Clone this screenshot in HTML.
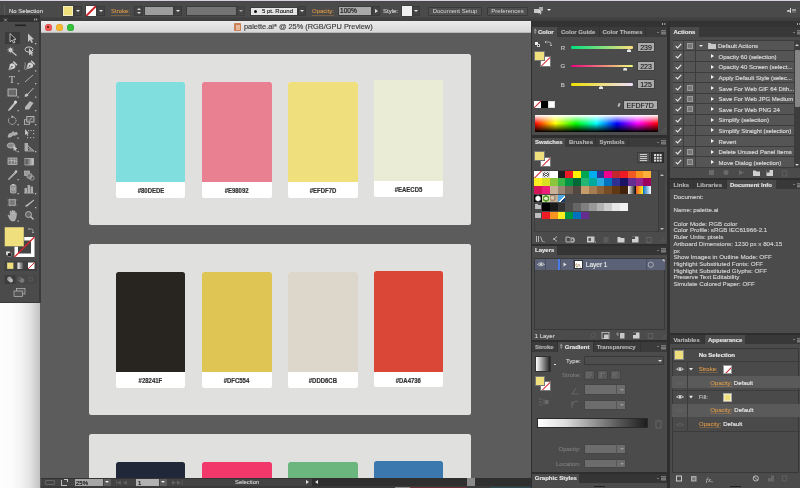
<!DOCTYPE html>
<html><head><meta charset="utf-8">
<style>
*{margin:0;padding:0;box-sizing:border-box}
html,body{width:800px;height:488px;overflow:hidden;background:#3a3a3a;font-family:"Liberation Sans",sans-serif;position:relative}
.a{position:absolute}
.t{position:absolute;white-space:nowrap;color:#d6d6d6;font-size:7px;line-height:1;-webkit-text-stroke:0.15px currentColor}
.dd{width:8px;height:10px;background:#444;border:1px solid #3a3a3a}
.dd:after{content:"";position:absolute;left:0.8px;top:3px;border-left:2px solid transparent;border-right:2px solid transparent;border-top:2.5px solid #e6e6e6}
.btn{height:9px;background:#505050;border:1px solid #3a3a3a;border-radius:1px;font-size:6px;color:#d8d8d8;text-align:center;line-height:7px}
.card{width:69.2px;height:116.3px;border-radius:2.5px;overflow:hidden;background:#fff}
.lab{-webkit-text-stroke:0.2px #333;height:16px;text-align:center;font-size:6.3px;font-weight:bold;color:#333;line-height:18.4px}.lab span{display:inline-block;transform:scaleX(0.95)}
.dd2{width:7.5px;height:7.5px;background:#5d5d5d}
.dd2:after{content:"";position:absolute;left:1.5px;top:2.5px;border-left:2.2px solid transparent;border-right:2.2px solid transparent;border-top:2.5px solid #eee}
.pn{background:#4b4b4b}
.tabrow{height:10px;background:#3b3b3b}
.tabon{height:10px;background:#4b4b4b}
.sep{width:1px;height:10px;background:#333}
.tb{font-size:6px;font-weight:bold;color:#b5b5b5}
.menu{width:9px;height:5px}
.menu:before{content:"";position:absolute;left:0;top:1.5px;border-left:1.5px solid transparent;border-right:1.5px solid transparent;border-top:1.8px solid #bbb}
.menu:after{content:"";position:absolute;left:4px;top:0;width:5px;height:5px;background:repeating-linear-gradient(#777 0 1px,#5a5a5a 1px 1.6px)}
.slid{width:62.5px;height:2.6px;border-radius:1.3px}
.thumb{width:4px;height:3px;background:#e8e8e8;clip-path:polygon(50% 0,100% 40%,100% 100%,0 100%,0 40%)}
.fld{background:#ababab;border:0.5px solid #404040;font-size:7px;color:#151515;text-align:center;line-height:10px;-webkit-text-stroke:0.1px #151515}
</style></head><body><div id="root" style="position:absolute;left:0;top:0;width:800px;height:488px;will-change:transform">
<!-- top line -->
<div class="a" style="left:0;top:0;width:800px;height:1px;background:#d8cfe0"></div>
<!-- control bar -->
<div class="a" id="cbar" style="left:0;top:1px;width:800px;height:19.5px;background:linear-gradient(#444 0,#4a4a4a 1px,#4a4a4a 15.5px,#414141 17px,#3e3e3e 100%)"></div>

<!-- control bar content -->
<div class="a" style="left:4px;top:5px;width:1px;height:10px;background:#3a3a3a;border-right:1px solid #5a5a5a"></div>
<div class="t" style="left:9px;top:8px;font-size:6px;color:#dcdcdc">No Selection</div>
<div class="a" style="left:63px;top:6px;width:10px;height:10px;background:#efdf7d;border:1px solid #f6efc0;box-shadow:0 0 0 0.5px #333"></div>
<div class="a dd" style="left:74px;top:6px"></div>
<div class="a" style="left:86px;top:6px;width:10px;height:10px;background:#fff;box-shadow:0 0 0 0.5px #333;overflow:hidden"><div class="a" style="left:-2px;top:4px;width:14px;height:1.5px;background:#d0202a;transform:rotate(-45deg)"></div></div>
<div class="a dd" style="left:97px;top:6px"></div>
<div class="t" style="left:111px;top:8px;font-size:6px;color:#e39d48;border-bottom:0.6px solid rgba(225,150,60,0.3);padding-bottom:0.6px;-webkit-text-stroke:0.05px">Stroke:</div>
<div class="a" style="left:134px;top:6px;width:9px;height:10px;background:#444;border:1px solid #3a3a3a"></div>
<div class="a" style="left:136.5px;top:7.5px;width:0;height:0;border-left:2px solid transparent;border-right:2px solid transparent;border-bottom:2px solid #cfcfcf"></div>
<div class="a" style="left:136.5px;top:12px;width:0;height:0;border-left:2px solid transparent;border-right:2px solid transparent;border-top:2px solid #cfcfcf"></div>
<div class="a" style="left:144px;top:6px;width:30px;height:10px;background:#9d9d9d;border:1px solid #3c3c3c"></div>
<div class="a dd" style="left:174px;top:6px"></div>
<div class="a" style="left:186px;top:6px;width:51px;height:10px;background:#747474;border:1px solid #3c3c3c"></div>
<div class="a dd" style="left:237px;top:6px;opacity:.6"></div>
<div class="a" style="left:250px;top:6.5px;width:48px;height:9px;background:#e4e4e4;border:1px solid #3c3c3c"></div>
<div class="a" style="left:253.5px;top:9.5px;width:3px;height:3px;border-radius:50%;background:#111"></div>
<div class="t" style="left:262px;top:8px;font-size:6px;color:#222">5 pt. Round</div>
<div class="a dd" style="left:298px;top:6px"></div>
<div class="t" style="left:312px;top:8px;font-size:6px;color:#e39d48;border-bottom:0.6px solid rgba(225,150,60,0.3);padding-bottom:0.6px;-webkit-text-stroke:0.05px">Opacity:</div>
<div class="a" style="left:338px;top:6px;width:34px;height:10px;background:#a9a9a9;border:1px solid #3c3c3c"></div>
<div class="t" style="left:340px;top:8px;font-size:6.6px;color:#111">100%</div>
<div class="a" style="left:372px;top:6px;width:8px;height:10px;background:#444;border:1px solid #3a3a3a"></div>
<div class="a" style="left:374.5px;top:9px;width:0;height:0;border-top:2px solid transparent;border-bottom:2px solid transparent;border-left:3px solid #e0e0e0"></div>
<div class="t" style="left:383px;top:8px;font-size:6px;color:#cfcfcf">Style:</div>
<div class="a" style="left:402px;top:6px;width:10px;height:10px;background:#efefef;box-shadow:0 0 0 0.5px #333"></div>
<div class="a dd" style="left:412px;top:6px"></div>
<div class="a btn" style="left:428px;top:6.5px;width:54px"><span>Document Setup</span></div>
<div class="a btn" style="left:487px;top:6.5px;width:41px"><span>Preferences</span></div>
<!-- cbar right icons -->
<div class="a" style="left:538.5px;top:6.5px;width:4px;height:4px;background:#aaa"></div>
<div class="a" style="left:534px;top:8.5px;width:5px;height:4px;background:#c8c8c8"></div>
<svg class="a" style="left:537.5px;top:9px" width="6" height="6"><path d="M0.5 0.5 L0.5 5 L1.7 3.8 L2.6 5.5 L3.3 5.2 L2.5 3.5 L4.2 3.4 Z" fill="#e0e0e0"/></svg>
<div class="a" style="left:546.5px;top:9.3px;border-left:2px solid transparent;border-right:2px solid transparent;border-top:2.5px solid #eee"></div>
<div class="a" style="left:786.5px;top:10px;width:3px;height:2px;background:#ccc;border-radius:1px"></div>
<div class="a" style="left:790px;top:8px;width:1.2px;height:5px;background:#d8d8d8"></div>
<div class="a" style="left:792px;top:9px;width:3.5px;height:4px;background:repeating-linear-gradient(#999 0 0.8px,#666 0.8px 1.3px)"></div>
<!-- dock dark band -->
<div class="a" style="left:0;top:20.5px;width:800px;height:1px;background:#353535"></div>

<!-- desktop white below tools -->
<div class="a" style="left:40px;top:303px;width:1px;height:185px;background:#5c5c5c"></div><div class="a" style="left:0;top:303px;width:40px;height:185px;background:linear-gradient(90deg,#fdfdfd 0%,#fbfbfb 30%,#f2f2f2 55%,#e2e2e2 76%,#c2c2c2 100%)"></div>

<!-- tools panel -->
<div class="a" id="tools" style="left:0;top:15px;width:40px;height:288px;background:#4b4b4b;border-right:1px solid #3a3a3a;border-bottom:1px solid #3a3a3a"></div>
<div class="a" style="left:0;top:15px;width:40px;height:7px;background:#323232"></div>


<!-- tools content -->
<svg class="a" style="left:0;top:0" width="41" height="303" viewBox="0 0 41 303">
<g fill="none" stroke="#a8a8a8" stroke-width="0.8"><path d="M4 18.5 L7 21.5 M7 18.5 L4 21.5"/></g>
<g fill="#9a9a9a"><rect x="34" y="18.5" width="1.2" height="2"/><rect x="36" y="18.5" width="1.2" height="2"/></g>
<rect x="15" y="24.5" width="11" height="1.6" fill="#222"/>
<rect x="5" y="32" width="15" height="12" fill="#3b3b3b"/>
<path d="M10 33.5 L10 42 L12 40 L13.5 43 L15 42.3 L13.5 39.5 L16 39.3 Z" fill="#333" stroke="#c4c4c4" stroke-width="0.9"/>
<path d="M28 33.5 L28 42 L30 40 L31.5 43 L33 42.3 L31.5 39.5 L34 39.3 Z" fill="#c4c4c4"/>
<g fill="#bdbdbd">
<rect x="35" y="43" width="1.3" height="1.3"/><rect x="18.3" y="70.3" width="1.3" height="1.3"/><rect x="35" y="70.3" width="1.3" height="1.3"/>
<rect x="17.5" y="83" width="1.3" height="1.3"/><rect x="35" y="83" width="1.3" height="1.3"/>
<rect x="17.5" y="96.5" width="1.3" height="1.3"/><rect x="35" y="96.5" width="1.3" height="1.3"/>
<rect x="17.5" y="110" width="1.3" height="1.3"/><rect x="35" y="110" width="1.3" height="1.3"/>
<rect x="17.5" y="124" width="1.3" height="1.3"/><rect x="35" y="124" width="1.3" height="1.3"/>
<rect x="17.5" y="137.5" width="1.3" height="1.3"/>
<rect x="17.5" y="151" width="1.3" height="1.3"/><rect x="35" y="151" width="1.3" height="1.3"/>
<rect x="17.5" y="179" width="1.3" height="1.3"/>
<rect x="17.5" y="193" width="1.3" height="1.3"/><rect x="35" y="193" width="1.3" height="1.3"/>
<rect x="35" y="207" width="1.3" height="1.3"/><rect x="17.5" y="220.5" width="1.3" height="1.3"/>
</g>
<!-- magic wand -->
<path d="M11 51 L16.5 55.5" stroke="#c4c4c4" stroke-width="1.2"/>
<circle cx="10.5" cy="50" r="2" fill="#e0e0e0"/>
<path d="M10.5 46.5 v7 M7 50 h7 M8 47.5 l5 5 M13 47.5 l-5 5" stroke="#bbb" stroke-width="0.5"/>
<!-- lasso -->
<ellipse cx="29" cy="49.5" rx="4" ry="2.6" fill="none" stroke="#c4c4c4" stroke-width="1"/>
<path d="M29 48 L29 55.5 L30.6 54 L31.8 56 L32.8 55.5 L31.8 53.5 L33.5 53.3 Z" fill="#c4c4c4"/>
<!-- pen -->
<g transform="translate(14.3 64.3) rotate(45)"><path d="M0 8.5 L-3 2.8 Q-3 0 0 0 Q3 0 3 2.8 Z" fill="#d2d2d2"/><rect x="-2.6" y="-1.9" width="5.2" height="1.4" fill="#d2d2d2"/><path d="M0 8 L0 3.5" stroke="#4a4a4a" stroke-width="0.6"/><circle cx="0" cy="3.3" r="0.7" fill="#4a4a4a"/></g>
<g transform="translate(32.1 63.5) rotate(45)"><path d="M0 8.5 L-3 2.8 Q-3 0 0 0 Q3 0 3 2.8 Z" fill="#d2d2d2"/><rect x="-2.6" y="-1.9" width="5.2" height="1.4" fill="#d2d2d2"/><path d="M0 8 L0 3.5" stroke="#4a4a4a" stroke-width="0.6"/><circle cx="0" cy="3.3" r="0.7" fill="#4a4a4a"/></g>
<path d="M24.8 62.5 Q26 64.5 24.8 66.5 Q23.8 69 26 70" fill="none" stroke="#aaa" stroke-width="0.8"/>
<!-- type -->
<text x="8.7" y="82.5" font-family="Liberation Serif" font-size="10.5" fill="#c4c4c4">T</text>
<!-- line -->
<path d="M25 82 L33 75" stroke="#c4c4c4" stroke-width="0.8"/>
<!-- rectangle -->
<rect x="8" y="89" width="8.5" height="7" fill="#6a6a6a" stroke="#c4c4c4" stroke-width="0.8"/>
<!-- paintbrush -->
<path d="M33.5 88 L28 94" stroke="#c4c4c4" stroke-width="0.9"/>
<path d="M24.5 96.5 Q25 93 27.5 93.5 Q29 95 28 96 Q26.5 97 24.5 96.5 Z" fill="#c4c4c4"/>
<!-- pencil -->
<path d="M15.5 101.5 L9.5 108.5 L8.5 110.5 L10.5 109.5 L16.5 102.5 Z" fill="#c4c4c4" stroke="#c4c4c4" stroke-width="0.8"/>
<circle cx="15.5" cy="102" r="1.5" fill="#ddd"/>
<!-- eraser -->
<path d="M30 101 L33.5 103 L29 109.5 L25 109.5 L25 107 Z" fill="#b5b5b5"/>
<!-- rotate -->
<path d="M13.5 117 A3.8 3.8 0 1 1 9.5 118" fill="none" stroke="#c4c4c4" stroke-width="1" stroke-dasharray="1.3 0.7"/>
<path d="M11.5 115.2 L13.8 117 L11.5 118.3 Z" fill="#c4c4c4"/>
<!-- scale -->
<rect x="24.5" y="119.8" width="5" height="4.5" fill="none" stroke="#c4c4c4" stroke-width="0.8"/>
<rect x="26.8" y="116.5" width="7.2" height="5.5" fill="#5a5a5a" stroke="#c4c4c4" stroke-width="0.8"/><path d="M28.5 121 L32.5 117.5" stroke="#ccc" stroke-width="0.6"/>
<!-- warp -->
<path d="M8 137 Q9 132 11 134 Q13 130 14.5 133 Q17 131 17.5 134 Q15 136 13 135 Q11 138 8 137 Z" fill="#aaa" stroke="#c4c4c4" stroke-width="0.6"/>
<!-- free transform -->
<path d="M25 129 L25 135 L26.5 134 L27.5 136 L28.3 135.6 L27.4 133.6 L29 133.4 Z" fill="#c4c4c4"/>
<g fill="#aaa"><rect x="28" y="130" width="1.2" height="1.2"/><rect x="30.5" y="130" width="1.2" height="1.2"/><rect x="33" y="130" width="1.2" height="1.2"/><rect x="33" y="133" width="1.2" height="1.2"/><rect x="27" y="137" width="1.2" height="1.2"/><rect x="30" y="137" width="1.2" height="1.2"/><rect x="33" y="137" width="1.2" height="1.2"/></g>
<!-- shape builder -->
<ellipse cx="11" cy="145.5" rx="3.8" ry="2.6" fill="#888" stroke="#c4c4c4" stroke-width="0.7"/>
<path d="M13.5 145 L13.5 151 L14.9 149.7 L15.9 151.6 L16.7 151.2 L15.8 149.3 L17.4 149.1 Z" fill="#c4c4c4"/>
<!-- perspective grid -->
<path d="M25 143 L25 151 L34 151 Z" fill="none" stroke="#c4c4c4" stroke-width="0.7"/>
<path d="M25 143 L32 150 M27.5 144 L27.5 151 M30 147 L30 151 M25 147 L34 151" stroke="#aaa" stroke-width="0.5"/>
<rect x="25" y="143" width="3" height="8" fill="#aaa"/>
<!-- mesh -->
<rect x="8" y="158" width="9" height="6.5" fill="#777" stroke="#c4c4c4" stroke-width="0.7"/>
<path d="M8 161 Q12 159.5 17 161.5 M11 158 Q12.5 161 11 164.5 M14 158 Q15.5 161 14 164.5" fill="none" stroke="#ddd" stroke-width="0.5"/>
<!-- gradient -->
<defs><linearGradient id="tg" x1="0" x2="1"><stop offset="0" stop-color="#444"/><stop offset="1" stop-color="#ccc"/></linearGradient></defs>
<rect x="25" y="158.5" width="8.5" height="6.5" fill="url(#tg)" stroke="#c4c4c4" stroke-width="0.7"/>
<!-- eyedropper -->
<path d="M15.5 171.5 L9 178.5 L8.5 179.5 L9.5 179 L16.5 172.5 Z" fill="#999" stroke="#c4c4c4" stroke-width="0.8"/>
<circle cx="16" cy="171.5" r="1.3" fill="#c4c4c4"/>
<!-- blend -->
<rect x="24.5" y="171" width="5" height="4.5" fill="#999" stroke="#c4c4c4" stroke-width="0.6"/>
<circle cx="29.5" cy="176" r="2.7" fill="#777" stroke="#c4c4c4" stroke-width="0.6"/>
<circle cx="32" cy="178" r="2.2" fill="none" stroke="#c4c4c4" stroke-width="0.6"/>
<!-- symbol sprayer -->
<rect x="10.5" y="185" width="5.5" height="8" rx="1" fill="#888" stroke="#c4c4c4" stroke-width="0.7"/>
<rect x="12" y="184" width="2.5" height="1.5" fill="#c4c4c4"/>
<circle cx="13.2" cy="189" r="1.5" fill="none" stroke="#ddd" stroke-width="0.5"/>
<!-- graph -->
<g fill="#aaa"><rect x="24.5" y="188" width="2.5" height="5"/><rect x="27.5" y="185" width="2.5" height="8"/><rect x="30.5" y="186.5" width="2.5" height="6.5"/></g>
<path d="M24 193.2 H34" stroke="#c4c4c4" stroke-width="0.6"/>
<!-- artboard -->
<rect x="9" y="199.5" width="6.5" height="6" fill="#777" stroke="#c4c4c4" stroke-width="0.6"/>
<path d="M7 200 H18 M7 205 H18 M10 198 V207 M14.5 198 V207" stroke="#999" stroke-width="0.4"/>
<!-- slice/knife -->
<path d="M34 200 L25.5 206 L27 206.2 Z" fill="#c4c4c4" stroke="#c4c4c4" stroke-width="0.8"/>
<!-- hand -->
<path d="M8 215 Q9 219 11.5 221 L14.5 221 Q16.5 218 16.5 214 L16 212.5 L15.2 214.5 L15 211 L14 211 L13.5 214 L13.2 210.5 L12 210.5 L11.8 214 L11 211.2 L10 211.3 L10.4 216 Z" fill="#aaa" stroke="#c4c4c4" stroke-width="0.5"/>
<!-- zoom -->
<circle cx="28.5" cy="214.5" r="3" fill="#666" stroke="#c4c4c4" stroke-width="0.8"/>
<path d="M30.5 216.5 L33.5 219.5" stroke="#c4c4c4" stroke-width="1.2"/>
<!-- swap arrows -->
<path d="M29 229 L31.5 229 Q33 229 33 231 L33 232.5 M28.5 228 L29 229 L28.5 230 M32 232 L33 233 L34 232" fill="none" stroke="#bbb" stroke-width="0.7"/>
<!-- stroke swatch -->
<rect x="14.5" y="237" width="20" height="20" fill="#fff"/>
<rect x="18" y="240.5" width="13" height="13" fill="#454545"/>
<path d="M14.5 257 L34.5 237" stroke="#d8262c" stroke-width="1.3"/>
<!-- fill swatch -->
<rect x="4.5" y="227" width="19.5" height="19.5" fill="#efdf7d" stroke="#555" stroke-width="0.5"/>
<!-- default -->
<rect x="6.2" y="251.5" width="3.5" height="3.5" fill="#eee"/>
<rect x="7.8" y="253" width="3.5" height="3.5" fill="#222" stroke="#ccc" stroke-width="0.4"/>
<!-- mode buttons -->
<rect x="4.5" y="261" width="32.5" height="10" fill="#3f3f3f"/>
<rect x="7" y="262.5" width="6.5" height="6.5" fill="#efdf7d" stroke="#666" stroke-width="0.4"/>
<defs><linearGradient id="tg2" x1="0" x2="1"><stop offset="0" stop-color="#fafafa"/><stop offset="1" stop-color="#333"/></linearGradient></defs>
<rect x="17.5" y="262.5" width="6.5" height="6.5" fill="url(#tg2)"/>
<rect x="28" y="262.5" width="6.5" height="6.5" fill="#fff"/>
<path d="M28 269 L34.5 262.5" stroke="#d8262c" stroke-width="1"/>
<!-- draw modes -->
<rect x="4.5" y="275" width="32.5" height="9" fill="#484848"/>
<rect x="4.5" y="275" width="11" height="9" fill="#3d3d3d"/>
<circle cx="9.5" cy="279" r="2" fill="#999" stroke="#ccc" stroke-width="0.5"/><circle cx="11" cy="280.5" r="2" fill="#bbb"/>
<circle cx="20" cy="279.3" r="2" fill="none" stroke="#888" stroke-width="0.5"/><circle cx="22" cy="280.5" r="2" fill="#777" stroke="#888" stroke-width="0.5"/>
<rect x="29" y="277.5" width="3.5" height="3.5" fill="none" stroke="#666" stroke-width="0.5"/>
<!-- screen mode -->
<rect x="16.5" y="288.5" width="8.5" height="5.5" fill="#555" stroke="#bbb" stroke-width="0.7"/>
<rect x="14" y="291" width="8.5" height="5.5" fill="#555" stroke="#bbb" stroke-width="0.7"/>
</svg>
<!-- document window -->
<div class="a" id="doc" style="left:41px;top:21px;width:490px;height:467px;background:#5c5c5c"></div>
<div class="a" id="title" style="left:41px;top:21px;width:490px;height:12px;background:linear-gradient(#ececec,#d8d8d8);border-bottom:1px solid #b9b9b9"></div>


<!-- doc content -->
<div class="a" style="left:88.5px;top:54px;width:382.5px;height:171px;background:#e0e0df;border-radius:2.5px"></div>
<div class="a card" style="left:116px;top:81.5px;width:69.2px"><div style="height:100.6px;background:#80dede"></div><div class="lab"><span>#80DEDE</span></div></div>
<div class="a card" style="left:202px;top:81.5px;width:69.5px"><div style="height:100.6px;background:#e98092"></div><div class="lab"><span>#E98092</span></div></div>
<div class="a card" style="left:288.2px;top:81.5px;width:69.4px"><div style="height:100.6px;background:#efdf7d"></div><div class="lab"><span>#EFDF7D</span></div></div>
<div class="a card" style="left:374px;top:80.3px;width:69.1px"><div style="height:100.6px;background:#eaecd5"></div><div class="lab"><span>#EAECD5</span></div></div>
<div class="a" style="left:88.5px;top:244px;width:382.5px;height:171px;background:#e0e0df;border-radius:2.5px"></div>
<div class="a card" style="left:116px;top:271.9px;width:69.2px"><div style="height:100.6px;background:#28241f"></div><div class="lab"><span>#28241F</span></div></div>
<div class="a card" style="left:202px;top:271.9px;width:69.5px"><div style="height:100.6px;background:#dfc554"></div><div class="lab"><span>#DFC554</span></div></div>
<div class="a card" style="left:288.2px;top:271.9px;width:69.4px"><div style="height:100.6px;background:#ddd6cb"></div><div class="lab"><span>#DDD6CB</span></div></div>
<div class="a card" style="left:374px;top:271.0px;width:69.1px"><div style="height:100.6px;background:#da4736"></div><div class="lab"><span>#DA4736</span></div></div>
<div class="a" style="left:88.5px;top:434px;width:382.5px;height:171px;background:#e0e0df;border-radius:2.5px"></div>
<div class="a card" style="left:116px;top:461.9px;width:69.2px"><div style="height:100.6px;background:#1f2738"></div><div class="lab"><span></span></div></div>
<div class="a card" style="left:202px;top:461.9px;width:69.5px"><div style="height:100.6px;background:#f2386a"></div><div class="lab"><span></span></div></div>
<div class="a card" style="left:288.2px;top:461.9px;width:69.4px"><div style="height:100.6px;background:#6bb57f"></div><div class="lab"><span></span></div></div>
<div class="a card" style="left:374px;top:460.9px;width:69.1px"><div style="height:100.6px;background:#3a78ae"></div><div class="lab"><span></span></div></div>
<!-- title bar content -->
<div class="a" style="left:44.5px;top:23.5px;width:7px;height:7px;border-radius:50%;background:#ee5b56;box-shadow:inset 0 0 0 0.5px #d84a45"></div>
<div class="a" style="left:47px;top:26px;width:2px;height:2px;border-radius:50%;background:#5a0f0d"></div>
<div class="a" style="left:55.5px;top:23.5px;width:7px;height:7px;border-radius:50%;background:#f5b730;box-shadow:inset 0 0 0 0.5px #dea020"></div>
<div class="a" style="left:66.5px;top:23.5px;width:7px;height:7px;border-radius:50%;background:#35c13b;box-shadow:inset 0 0 0 0.5px #22a52a"></div>
<div class="a" style="left:234px;top:23px;width:7px;height:8px;background:#c98054;border-radius:1px"></div>
<div class="a" style="left:236px;top:25px;width:4px;height:5px;background:#e7b99a"></div>
<div class="t" style="left:244px;top:23px;font-size:7.4px;color:#3c3c3c">palette.ai* @ 25% (RGB/GPU Preview)</div>
<!-- status bar -->
<div class="a" style="left:41px;top:478px;width:490px;height:8px;background:#434343;border-top:0.5px solid #333"></div>
<div class="a" style="left:41px;top:486px;width:490px;height:2px;background:#3a3a3a"></div>
<div class="a" style="left:44.5px;top:479.5px;width:10px;height:5px;border:0.7px solid #666;border-radius:1px"></div>
<div class="a" style="left:61px;top:479.5px;width:6px;height:6px;border:0.7px solid #bbb;border-top:none;border-right:none"></div>
<div class="a" style="left:63.5px;top:479px;width:4px;height:3px;border:0.7px solid #ccc;border-left:none;border-bottom:none"></div>
<div class="a" style="left:75px;top:478.5px;width:28px;height:7.5px;background:#a6a6a6"></div>
<div class="t" style="left:76px;top:480px;font-size:6px;color:#111">25%</div>
<div class="a dd2" style="left:103.5px;top:478.5px"></div>
<div class="t" style="left:116px;top:480px;font-size:5px;color:#666">|◀ ◀</div>
<div class="a" style="left:136px;top:478.5px;width:23px;height:7.5px;background:#b2b2b2"></div>
<div class="t" style="left:138px;top:480px;font-size:6px;color:#111">1</div>
<div class="a dd2" style="left:159.5px;top:478.5px"></div>
<div class="t" style="left:172px;top:480px;font-size:5px;color:#666">▶ ▶|</div>
<div class="t" style="left:235px;top:480px;font-size:5.9px;color:#cfcfcf">Selection</div>
<div class="a" style="left:306px;top:480px;width:0;height:0;border-top:2.2px solid transparent;border-bottom:2.2px solid transparent;border-left:3px solid #ddd"></div>
<div class="a" style="left:312px;top:478px;width:219px;height:8px;background:#2f2f2f"></div>
<div class="a" style="left:315px;top:480px;width:0;height:0;border-top:2.2px solid transparent;border-bottom:2.2px solid transparent;border-right:3px solid #ddd"></div>
<div class="a" style="left:466.5px;top:478px;width:8px;height:8px;background:#8a8a8a"></div>
<div class="a" style="left:395px;top:486.5px;width:15px;height:1.5px;background:#8a8a8a"></div>
<div class="a" style="left:410px;top:486.5px;width:57px;height:1.5px;background:#6b3036"></div>
<div class="a" style="left:490px;top:486.5px;width:41px;height:1.5px;background:#2c4f57"></div>
<!-- right panels -->
<div class="a" id="col1" style="left:531px;top:21px;width:137px;height:467px;background:#535353"></div>
<div class="a" id="col2" style="left:670px;top:21px;width:130px;height:467px;background:#535353"></div>


<!-- ============ COLUMN 1 ============ -->
<!--COL1BODY-->
<div class="a" style="left:531px;top:20.5px;width:139px;height:468px;background:#2e2e2e"></div>
<div class="a" style="left:531px;top:20.5px;width:137px;height:6.5px;background:#333"></div>
<div class="a" style="left:661.5px;top:23px;width:1.3px;height:1.6px;background:#aaa;box-shadow:2.3px 0 0 #aaa"></div>
<!-- Color panel -->
<div class="a pn" style="left:532px;top:27px;width:135px;height:107.5px"></div>
<div class="a tabrow" style="left:532px;top:27px;width:135px"></div>
<div class="a tabon" style="left:532px;top:27px;width:25px"></div>
<div class="a sep" style="left:598.5px;top:27px"></div><div class="a sep" style="left:645px;top:27px"></div>
<div class="t tb" style="left:538px;top:28.8px;color:#e6e6e6">Color</div>
<div class="t tb" style="left:561px;top:28.8px">Color Guide</div>
<div class="t tb" style="left:602.5px;top:28.8px">Color Themes</div>
<div class="a menu" style="left:657px;top:30px"></div>
<div class="t" style="left:533.8px;top:29px;font-size:4.5px;color:#999;line-height:2.5px">&#9652;<br>&#9662;</div>

<!-- color body -->
<div class="a" style="left:534.8px;top:41.8px;width:3.6px;height:3.6px;background:#eee"></div>
<div class="a" style="left:536.6px;top:43.6px;width:3.6px;height:3.6px;background:#111;border:0.5px solid #ccc"></div>
<svg class="a" style="left:544px;top:40px" width="8" height="8"><path d="M1 2 L5 2 Q7 2 7 4 L7 6 M2.2 0.8 L1 2 L2.2 3.2 M5.8 4.8 L7 6 L8 4.8" fill="none" stroke="#bbb" stroke-width="0.8"/></svg>
<div class="a" style="left:540px;top:56px;width:10.5px;height:10.5px;background:#fff;border:0.5px solid #777;overflow:hidden"><div class="a" style="left:-3px;top:4.2px;width:16px;height:1.3px;background:#d42a2f;transform:rotate(-45deg)"></div></div>
<div class="a" style="left:534.3px;top:50.8px;width:10.3px;height:10px;background:#efdf7d;border:0.5px solid #777"></div>
<div class="t" style="left:560.8px;top:45px;font-size:6px;color:#c8c8c8">R</div>
<div class="t" style="left:560.5px;top:63px;font-size:6px;color:#c8c8c8">G</div>
<div class="t" style="left:560.8px;top:82px;font-size:6px;color:#c8c8c8">B</div>
<div class="a slid" style="left:570.5px;top:46px;background:linear-gradient(90deg,#00df7d,#ffdf7d)"></div>
<div class="a slid" style="left:570.5px;top:64.5px;background:linear-gradient(90deg,#ef007d,#efff7d)"></div>
<div class="a slid" style="left:570.5px;top:83px;background:linear-gradient(90deg,#efdf00,#efdfff)"></div>
<div class="a thumb" style="left:627px;top:49px"></div>
<div class="a thumb" style="left:623.2px;top:67.5px"></div>
<div class="a thumb" style="left:599px;top:86px"></div>
<div class="a fld" style="left:637px;top:42px;width:18px;height:10px">239</div>
<div class="a fld" style="left:637px;top:60.5px;width:18px;height:10px">223</div>
<div class="a fld" style="left:637px;top:79px;width:18px;height:10px">125</div>
<div class="a" style="left:534.2px;top:100.8px;width:7px;height:7px;background:#fff;overflow:hidden"><div class="a" style="left:-2px;top:2.8px;width:11px;height:1.2px;background:#d42a2f;transform:rotate(-45deg)"></div></div>
<div class="a" style="left:541.2px;top:100.8px;width:7px;height:7px;background:#000"></div>
<div class="a" style="left:548.2px;top:100.8px;width:7px;height:7px;background:#fff;border:0.5px solid #ddd"></div>
<div class="a" style="left:617.5px;top:102.5px;width:2.2px;height:4px;background:#bbb;border-radius:1px;transform:rotate(20deg)"></div>
<div class="a fld" style="left:623px;top:100px;width:35px;height:9.5px;text-align:left;padding-left:2.5px;line-height:9.5px">EFDF7D</div>
<div class="a" style="left:535px;top:114.5px;width:123px;height:17.5px;background:linear-gradient(180deg,#fff 0%,rgba(255,255,255,0) 50%,rgba(0,0,0,0) 50%,#000 100%),linear-gradient(90deg,#f00 0%,#ff0 16.6%,#0f0 33.3%,#0ff 50%,#00f 66.6%,#f0f 83.3%,#f00 100%)"></div>
<svg class="a" style="left:660px;top:127px" width="7" height="7"><path d="M6 1 L1 6 M6 3.5 L3.5 6" stroke="#666" stroke-width="0.6"/></svg>

<!-- Swatches panel -->
<div class="a" style="left:532px;top:134.5px;width:135px;height:3px;background:#2e2e2e"></div>
<div class="a pn" style="left:532px;top:137.5px;width:135px;height:106px"></div>
<div class="a tabrow" style="left:532px;top:137.5px;width:135px;height:9px"></div>
<div class="a tabon" style="left:532px;top:137.5px;width:33px;height:9px"></div>
<div class="a sep" style="left:595px;top:137.5px;height:9px"></div><div class="a sep" style="left:627.5px;top:137.5px;height:9px"></div>
<div class="t tb" style="left:535px;top:138.8px;color:#e6e6e6">Swatches</div>
<div class="t tb" style="left:569px;top:138.8px">Brushes</div>
<div class="t tb" style="left:599.5px;top:138.8px">Symbols</div>
<div class="a menu" style="left:657px;top:140px"></div>
<div class="a" style="left:540px;top:156.5px;width:10.5px;height:10px;background:#fff;border:0.5px solid #777;overflow:hidden"><div class="a" style="left:-3px;top:4px;width:16px;height:1.3px;background:#d42a2f;transform:rotate(-45deg)"></div></div>
<div class="a" style="left:534.3px;top:151px;width:10.3px;height:10px;background:#efdf7d;border:0.5px solid #777"></div>
<div class="a" style="left:636.7px;top:151.7px;width:13px;height:11.5px;background:#575757;border:0.5px solid #3a3a3a"></div>
<div class="a" style="left:639.5px;top:154px;width:7.5px;height:7px;background:repeating-linear-gradient(#c8c8c8 0 1px,transparent 1px 2px)"></div>
<div class="a" style="left:651.2px;top:151.7px;width:13px;height:11.5px;background:#333;border:0.5px solid #2a2a2a"></div>
<svg class="a" style="left:654px;top:154px" width="8" height="8"><g fill="#ddd"><rect x="0" y="0" width="2" height="2"/><rect x="2.8" y="0" width="2" height="2"/><rect x="5.6" y="0" width="2" height="2"/><rect x="0" y="2.8" width="2" height="2"/><rect x="2.8" y="2.8" width="2" height="2"/><rect x="5.6" y="2.8" width="2" height="2"/><rect x="0" y="5.6" width="2" height="2"/><rect x="2.8" y="5.6" width="2" height="2"/><rect x="5.6" y="5.6" width="2" height="2"/></g></svg>
<div class="a" style="left:533.8px;top:169.8px;width:131px;height:62.5px;border:0.5px solid #3e3e3e;background:#4a4a4a"></div>
<div class="a" style="left:657.8px;top:170px;width:7.2px;height:62px;background:#444;border-left:0.5px solid #3a3a3a"></div>
<div class="a" style="left:659.5px;top:173.5px;border-left:2px solid transparent;border-right:2px solid transparent;border-bottom:2px solid #bbb"></div>
<div class="a" style="left:659.5px;top:227.5px;border-left:2px solid transparent;border-right:2px solid transparent;border-top:2px solid #bbb"></div>
<!-- swatches grid -->
<div class="a" style="left:534.2px;top:170.6px;width:7.8px;height:7.8px;background:#fff;overflow:hidden"><div class="a" style="left:-2px;top:3.2px;width:12px;height:1.2px;background:#d42a2f;transform:rotate(-45deg)"></div></div>
<div class="a" style="left:542.0px;top:170.6px;width:7.8px;height:7.8px;background:radial-gradient(circle,#fff 0 1px,#555 1px 1.6px,#eee 1.6px 2.4px,#666 2.4px 2.9px,#ddd 2.9px)"></div>
<div class="a" style="left:549.8px;top:170.6px;width:7.8px;height:7.8px;background:#ffffff"></div>
<div class="a" style="left:557.6px;top:170.6px;width:7.8px;height:7.8px;background:#231f20"></div>
<div class="a" style="left:565.4px;top:170.6px;width:7.8px;height:7.8px;background:#ed1c24"></div>
<div class="a" style="left:573.2px;top:170.6px;width:7.8px;height:7.8px;background:#fff200"></div>
<div class="a" style="left:581.0px;top:170.6px;width:7.8px;height:7.8px;background:#00a651"></div>
<div class="a" style="left:588.8px;top:170.6px;width:7.8px;height:7.8px;background:#00aeef"></div>
<div class="a" style="left:596.6px;top:170.6px;width:7.8px;height:7.8px;background:#2e3192"></div>
<div class="a" style="left:604.4px;top:170.6px;width:7.8px;height:7.8px;background:#ec008c"></div>
<div class="a" style="left:612.2px;top:170.6px;width:7.8px;height:7.8px;background:#c1272d"></div>
<div class="a" style="left:620.0px;top:170.6px;width:7.8px;height:7.8px;background:#ed1c24"></div>
<div class="a" style="left:627.8px;top:170.6px;width:7.8px;height:7.8px;background:#f15a24"></div>
<div class="a" style="left:635.6px;top:170.6px;width:7.8px;height:7.8px;background:#f7931e"></div>
<div class="a" style="left:643.4px;top:170.6px;width:7.8px;height:7.8px;background:#fbb03b"></div>
<div class="a" style="left:534.2px;top:178.4px;width:7.8px;height:7.8px;background:#fcee21"></div>
<div class="a" style="left:542.0px;top:178.4px;width:7.8px;height:7.8px;background:#d9e021"></div>
<div class="a" style="left:549.8px;top:178.4px;width:7.8px;height:7.8px;background:#8cc63f"></div>
<div class="a" style="left:557.6px;top:178.4px;width:7.8px;height:7.8px;background:#39b54a"></div>
<div class="a" style="left:565.4px;top:178.4px;width:7.8px;height:7.8px;background:#009245"></div>
<div class="a" style="left:573.2px;top:178.4px;width:7.8px;height:7.8px;background:#006837"></div>
<div class="a" style="left:581.0px;top:178.4px;width:7.8px;height:7.8px;background:#22b573"></div>
<div class="a" style="left:588.8px;top:178.4px;width:7.8px;height:7.8px;background:#00a99d"></div>
<div class="a" style="left:596.6px;top:178.4px;width:7.8px;height:7.8px;background:#29abe2"></div>
<div class="a" style="left:604.4px;top:178.4px;width:7.8px;height:7.8px;background:#0071bc"></div>
<div class="a" style="left:612.2px;top:178.4px;width:7.8px;height:7.8px;background:#2e3192"></div>
<div class="a" style="left:620.0px;top:178.4px;width:7.8px;height:7.8px;background:#1b1464"></div>
<div class="a" style="left:627.8px;top:178.4px;width:7.8px;height:7.8px;background:#662d91"></div>
<div class="a" style="left:635.6px;top:178.4px;width:7.8px;height:7.8px;background:#93278f"></div>
<div class="a" style="left:643.4px;top:178.4px;width:7.8px;height:7.8px;background:#9e005d"></div>
<div class="a" style="left:534.2px;top:186.2px;width:7.8px;height:7.8px;background:#d4145a"></div>
<div class="a" style="left:542.0px;top:186.2px;width:7.8px;height:7.8px;background:#ed1e79"></div>
<div class="a" style="left:549.8px;top:186.2px;width:7.8px;height:7.8px;background:#c7b299"></div>
<div class="a" style="left:557.6px;top:186.2px;width:7.8px;height:7.8px;background:#998675"></div>
<div class="a" style="left:565.4px;top:186.2px;width:7.8px;height:7.8px;background:#736357"></div>
<div class="a" style="left:573.2px;top:186.2px;width:7.8px;height:7.8px;background:#534741"></div>
<div class="a" style="left:581.0px;top:186.2px;width:7.8px;height:7.8px;background:#c69c6d"></div>
<div class="a" style="left:588.8px;top:186.2px;width:7.8px;height:7.8px;background:#a67c52"></div>
<div class="a" style="left:596.6px;top:186.2px;width:7.8px;height:7.8px;background:#8c6239"></div>
<div class="a" style="left:604.4px;top:186.2px;width:7.8px;height:7.8px;background:#754c24"></div>
<div class="a" style="left:612.2px;top:186.2px;width:7.8px;height:7.8px;background:#603813"></div>
<div class="a" style="left:620.0px;top:186.2px;width:7.8px;height:7.8px;background:#42210b"></div>
<div class="a" style="left:627.8px;top:186.2px;width:7.8px;height:7.8px;background:linear-gradient(90deg,#fff,#000)"></div>
<div class="a" style="left:635.6px;top:186.2px;width:7.8px;height:7.8px;background:linear-gradient(90deg,#f15a24,#fcee21)"></div>
<div class="a" style="left:643.4px;top:186.2px;width:7.8px;height:7.8px;background:linear-gradient(90deg,#0071bc,#fff)"></div>
<div class="a" style="left:534.2px;top:194.6px;width:7.8px;height:7.8px;background:radial-gradient(circle,#fff 0 2px,#999 2.5px,#000 3.5px)"></div>
<div class="a" style="left:542.0px;top:194.6px;width:7.8px;height:7.8px;background:radial-gradient(circle,#e6f0c8 0 1.5px,#5a9a32 2px 3px,#c9df9a 3.5px)"></div>
<div class="a" style="left:549.8px;top:194.6px;width:7.8px;height:7.8px;background:radial-gradient(circle at 30% 40%,#d8c4a8 0 1.5px,#9a8572 2.5px,#c2ae95 4px)"></div>
<div class="a" style="left:557.6px;top:194.6px;width:7.8px;height:7.8px;background:linear-gradient(135deg,#4aa8e8 0 55%,#fff 55% 70%,#1a3a6a 70%)"></div>
<div class="a" style="left:534.2px;top:203.0px;width:7.8px;height:7.8px;background:transparent"><div class="a" style="left:1px;top:1.8px;width:6px;height:4.5px;background:#bdbdbd;border-radius:0.5px"></div><div class="a" style="left:1px;top:1px;width:2.5px;height:1.2px;background:#bdbdbd"></div></div>
<div class="a" style="left:542.0px;top:203.0px;width:7.8px;height:7.8px;background:#000000"></div>
<div class="a" style="left:549.8px;top:203.0px;width:7.8px;height:7.8px;background:#1a1a1a"></div>
<div class="a" style="left:557.6px;top:203.0px;width:7.8px;height:7.8px;background:#333333"></div>
<div class="a" style="left:565.4px;top:203.0px;width:7.8px;height:7.8px;background:#4d4d4d"></div>
<div class="a" style="left:573.2px;top:203.0px;width:7.8px;height:7.8px;background:#666666"></div>
<div class="a" style="left:581.0px;top:203.0px;width:7.8px;height:7.8px;background:#808080"></div>
<div class="a" style="left:588.8px;top:203.0px;width:7.8px;height:7.8px;background:#999999"></div>
<div class="a" style="left:596.6px;top:203.0px;width:7.8px;height:7.8px;background:#b3b3b3"></div>
<div class="a" style="left:604.4px;top:203.0px;width:7.8px;height:7.8px;background:#cccccc"></div>
<div class="a" style="left:612.2px;top:203.0px;width:7.8px;height:7.8px;background:#e6e6e6"></div>
<div class="a" style="left:620.0px;top:203.0px;width:7.8px;height:7.8px;background:#f2f2f2"></div>
<div class="a" style="left:534.2px;top:211.6px;width:7.8px;height:7.8px;background:transparent"><div class="a" style="left:1px;top:1.8px;width:6px;height:4.5px;background:#bdbdbd;border-radius:0.5px"></div><div class="a" style="left:1px;top:1px;width:2.5px;height:1.2px;background:#bdbdbd"></div></div>
<div class="a" style="left:542.0px;top:211.6px;width:7.8px;height:7.8px;background:#ed1c24"></div>
<div class="a" style="left:549.8px;top:211.6px;width:7.8px;height:7.8px;background:#f7931e"></div>
<div class="a" style="left:557.6px;top:211.6px;width:7.8px;height:7.8px;background:#fcee21"></div>
<div class="a" style="left:565.4px;top:211.6px;width:7.8px;height:7.8px;background:#009245"></div>
<div class="a" style="left:573.2px;top:211.6px;width:7.8px;height:7.8px;background:#0071bc"></div>
<div class="a" style="left:581.0px;top:211.6px;width:7.8px;height:7.8px;background:#662d91"></div>

<!-- swatch footer icons -->
<svg class="a" style="left:532px;top:234px" width="135" height="10">
<g fill="none" stroke="#c0c0c0" stroke-width="0.9">
<path d="M4.5 2 V8 M6.5 2 V8 M8.5 2.5 L10.5 8"/>
<path d="M25 2.5 L22 5 L25 7.5"/><circle cx="22" cy="5" r="0.6"/>
<path d="M34 3 h3 l1 1 h4 v4 h-8 z"/><circle cx="40.5" cy="6.2" r="1.6"/>
</g>
<rect x="11.5" y="7.3" width="1" height="1" fill="#bbb"/>
<rect x="55" y="2.5" width="7.5" height="6" fill="#c8c8c8"/><rect x="56.5" y="4" width="2.5" height="3" fill="#555"/><rect x="63" y="7.5" width="1" height="1" fill="#bbb"/>
<rect x="71.5" y="3" width="5" height="5.5" fill="#5c5c5c"/>
<path d="M85.5 3 h2.5 l1 1 h3.5 v4.5 h-7 z" fill="#d0d0d0"/>
<path d="M100 2.5 h6.5 v6 h-6.5 z" fill="#d0d0d0"/><path d="M100 2.5 h3 v2.5 h-3z" fill="#4a4a4a"/>
<path d="M114 3.5 h6 M114.8 4.2 v4.3 h4.4 v-4.3" fill="none" stroke="#6a6a6a" stroke-width="0.8"/>
<path d="M128 8.5 L133 3.5 M130.5 8.5 L133 6" stroke="#606060" stroke-width="0.6"/>
</svg>

<!-- Layers panel -->
<div class="a pn" style="left:532px;top:245.5px;width:135px;height:94.7px"></div>
<div class="a tabrow" style="left:532px;top:245.5px;width:135px;height:9.5px;background:#353535"></div>
<div class="a tabon" style="left:532px;top:245.5px;width:25px;height:9.5px"></div>
<div class="t tb" style="left:535px;top:247.3px;color:#e6e6e6">Layers</div>
<div class="a menu" style="left:657px;top:248px"></div>
<div class="a" style="left:533.8px;top:257.5px;width:131.5px;height:72px;border:0.7px solid #393939;background:#4a4a4a"></div>
<div class="a" style="left:534.8px;top:258.5px;width:130px;height:11.5px;background:#5b6277"></div>
<div class="a" style="left:545px;top:258.5px;width:0.6px;height:11.5px;background:#4a5062"></div>
<div class="a" style="left:557.7px;top:258.8px;width:2.3px;height:11px;background:#4a7ae8"></div>
<div class="a" style="left:560px;top:258.5px;width:0.6px;height:11.5px;background:#4a5062"></div>
<div class="a" style="left:572.5px;top:258.5px;width:0.6px;height:11.5px;background:#4a5062"></div>
<div class="a" style="left:645.5px;top:258.5px;width:0.6px;height:11.5px;background:#4a5062"></div>
<svg class="a" style="left:535px;top:259px" width="130" height="11">
<path d="M2.5 5.5 Q6 2 9.5 5.5 Q6 8.5 2.5 5.5 Z" fill="none" stroke="#d0d0d0" stroke-width="0.8"/><circle cx="6" cy="5.3" r="1.2" fill="#d0d0d0"/>
<path d="M28.5 3.5 L31.5 5.5 L28.5 7.5 Z" fill="#e0e0e0"/>
<circle cx="115.8" cy="5.7" r="2.6" fill="none" stroke="#ccc" stroke-width="0.7"/>
<path d="M127 0.5 L129.5 0.5 L129.5 3 Z" fill="#ddd"/>
</svg>
<div class="a" style="left:573.5px;top:260px;width:9px;height:9px;background:#fff;border:0.5px solid #333"></div>
<svg class="a" style="left:574px;top:260.5px" width="8" height="8"><path d="M1 5 L2.5 2.5 L3.5 6 L5 3 L6.5 6.5" fill="none" stroke="#b07a6a" stroke-width="0.6"/><rect x="2" y="5" width="1.5" height="1.5" fill="#9cbf7a"/></svg>
<div class="t" style="left:585.8px;top:261.8px;font-size:6.5px;color:#e8e8e8">Layer 1</div>
<div class="t" style="left:534.7px;top:333px;font-size:6px;color:#d0d0d0">1 Layer</div>
<svg class="a" style="left:532px;top:330px" width="135" height="11">
<circle cx="61.5" cy="5" r="2.2" fill="none" stroke="#5e5e5e" stroke-width="0.8"/><path d="M59.5 7 L57.5 9" stroke="#5e5e5e" stroke-width="0.8"/>
<rect x="70" y="2.5" width="7" height="6" fill="none" stroke="#c8c8c8" stroke-width="0.8"/><rect x="72" y="4.5" width="4.5" height="4.5" fill="#c8c8c8"/>
<path d="M85 3 h1.5 M85 3 v2 h2" stroke="#c8c8c8" stroke-width="0.6" fill="none"/><rect x="88" y="3" width="4.5" height="5.5" fill="#c8c8c8"/>
<rect x="101" y="2.5" width="6.5" height="6" fill="#d0d0d0"/><path d="M101 2.5 h3 v2.5 h-3z" fill="#4a4a4a"/>
<path d="M115.5 3.5 h6 M116.3 4.2 v4.3 h4.4 v-4.3" fill="none" stroke="#666" stroke-width="0.8"/>
<path d="M129 9.5 L134 4.5 M131.5 9.5 L134 7" stroke="#606060" stroke-width="0.6"/>
</svg>

<!-- Gradient panel -->
<div class="a pn" style="left:532px;top:342px;width:135px;height:130px"></div>
<div class="a tabrow" style="left:532px;top:342px;width:135px;height:9.5px"></div>
<div class="a tabon" style="left:557px;top:342px;width:36px;height:9.5px"></div>
<div class="a sep" style="left:593px;top:342px;height:9.5px"></div><div class="a sep" style="left:556.5px;top:342px;height:9.5px"></div><div class="a sep" style="left:640px;top:342px;height:9.5px"></div>
<div class="t tb" style="left:535px;top:343.8px">Stroke</div>
<div class="t tb" style="left:564.8px;top:343.8px;color:#e6e6e6">Gradient</div>
<div class="t tb" style="left:596.7px;top:343.8px">Transparency</div>
<div class="t" style="left:560px;top:344px;font-size:4.5px;color:#999;line-height:2.5px">&#9652;<br>&#9662;</div>
<div class="a menu" style="left:657px;top:344.5px"></div>
<div class="a" style="left:535px;top:355.5px;width:16px;height:16px;background:linear-gradient(90deg,#fff,#222);border:0.5px solid #333"></div>
<div class="a" style="left:554px;top:364px;width:2px;height:0.8px;background:#ddd"></div>
<div class="t" style="left:566px;top:357.7px;font-size:6px;color:#cfcfcf">Type:</div>
<div class="a" style="left:583.6px;top:356px;width:80px;height:9px;background:#4d4d4d;border:0.5px solid #383838;border-radius:1px"></div>
<div class="a" style="left:657.5px;top:359.5px;border-left:2.2px solid transparent;border-right:2.2px solid transparent;border-top:2.5px solid #ddd"></div>
<div class="t" style="left:562px;top:372.3px;font-size:6px;color:#777">Stroke:</div>
<div class="a" style="left:584px;top:369.5px;width:11px;height:10px;background:#595959;border:0.5px solid #444"></div>
<div class="a" style="left:597px;top:369.5px;width:11px;height:10px;background:#595959;border:0.5px solid #444"></div>
<div class="a" style="left:610px;top:369.5px;width:11px;height:10px;background:#595959;border:0.5px solid #444"></div>
<svg class="a" style="left:584px;top:369.5px" width="40" height="10"><g fill="none" stroke="#777" stroke-width="0.7"><path d="M3 8 V3 H8 M5 8 V5 H8"/><path d="M16 8 V3 H21 M17.5 3 V8"/><path d="M29 8 V3 H34 M29 5 H32 V8"/></g></svg>
<div class="a" style="left:540px;top:381px;width:10.5px;height:10px;background:#fff;border:0.5px solid #777;overflow:hidden"><div class="a" style="left:-3px;top:4px;width:16px;height:1.3px;background:#d42a2f;transform:rotate(-45deg)"></div></div>
<div class="a" style="left:534.5px;top:376px;width:10.3px;height:10px;background:#efdf7d;border:0.5px solid #777"></div>
<svg class="a" style="left:570px;top:386px" width="12" height="24"><g fill="none" stroke="#777" stroke-width="0.7"><path d="M2 8 L6 2 M2 8 H9"/><path d="M3 19 A3 3 0 0 1 8 16"/><path d="M2 15 V22"/></g></svg>
<div class="a" style="left:583.5px;top:384px;width:42px;height:11px;background:#6c6c6c;border:0.5px solid #454545"></div>
<div class="a" style="left:616px;top:384.5px;width:0.6px;height:10px;background:#555"></div>
<div class="a" style="left:619.5px;top:388.8px;border-left:2px solid transparent;border-right:2px solid transparent;border-top:2.3px solid #999"></div>
<div class="a" style="left:583.5px;top:399.5px;width:42px;height:10px;background:#6c6c6c;border:0.5px solid #454545"></div>
<div class="a" style="left:616px;top:400px;width:0.6px;height:9px;background:#555"></div>
<div class="a" style="left:619.5px;top:403.8px;border-left:2px solid transparent;border-right:2px solid transparent;border-top:2.3px solid #999"></div>
<svg class="a" style="left:538px;top:397px" width="12" height="10"><g stroke="#6a6a6a" stroke-width="0.8"><path d="M1 2 H4 M1 5 H4 M1 8 H4 M6 2 V8"/></g><rect x="7" y="3" width="3.5" height="4" fill="#6a6a6a"/></svg>
<div class="a" style="left:537.4px;top:418.3px;width:111px;height:9.7px;background:linear-gradient(90deg,#fff 0%,#ddd 25%,#555 75%,#1e1e1e 100%);border:0.5px solid #2a2a2a"></div>
<svg class="a" style="left:654px;top:419px" width="9" height="10"><path d="M1 2 h7 M2 3 v6 h5 v-6 M4 1 h1" fill="none" stroke="#6c6c6c" stroke-width="0.8"/></svg>
<div class="t" style="left:558.5px;top:446px;font-size:6px;color:#7a7a7a">Opacity:</div>
<div class="a" style="left:583.5px;top:443.7px;width:42px;height:10.3px;background:#6c6c6c;border:0.5px solid #454545"></div>
<div class="a" style="left:616px;top:444px;width:0.6px;height:9.5px;background:#555"></div>
<div class="a" style="left:619.5px;top:448px;border-left:2px solid transparent;border-right:2px solid transparent;border-top:2.3px solid #999"></div>
<div class="t" style="left:556px;top:460.8px;font-size:6px;color:#7a7a7a">Location:</div>
<div class="a" style="left:583.5px;top:458.7px;width:42px;height:9.8px;background:#6c6c6c;border:0.5px solid #454545"></div>
<div class="a" style="left:616px;top:459px;width:0.6px;height:9px;background:#555"></div>
<div class="a" style="left:619.5px;top:462.8px;border-left:2px solid transparent;border-right:2px solid transparent;border-top:2.3px solid #999"></div>

<!-- Graphic styles -->
<div class="a" style="left:532px;top:472px;width:135px;height:2px;background:#2e2e2e"></div>
<div class="a pn" style="left:532px;top:474px;width:135px;height:14px"></div>
<div class="a tabrow" style="left:532px;top:474px;width:135px;height:8.7px;background:#353535"></div>
<div class="a tabon" style="left:532px;top:474px;width:47px;height:8.7px"></div>
<div class="t tb" style="left:534.8px;top:475.3px;color:#e6e6e6">Graphic Styles</div>
<div class="a menu" style="left:657px;top:476px"></div>
<div class="a" style="left:594px;top:485.5px;width:11px;height:1.5px;background:#222"></div>

<!-- ============ COLUMN 2 ============ -->
<div class="a" style="left:670px;top:20.5px;width:130px;height:6.5px;background:#333"></div>
<div class="a" style="left:797px;top:23px;width:1.3px;height:1.6px;background:#aaa;box-shadow:2.3px 0 0 #aaa"></div>
<div class="a pn" style="left:670px;top:27px;width:130px;height:151px"></div>
<div class="a tabrow" style="left:670px;top:27px;width:130px;height:10px;background:#383838"></div>
<div class="a tabon" style="left:670px;top:27px;width:29px"></div>
<div class="t tb" style="left:673.4px;top:28.8px;color:#e6e6e6">Actions</div>
<div class="a menu" style="left:793px;top:30px"></div>
<div class="a" style="left:672.5px;top:40px;width:128px;height:128px;background:#555"></div><div class="a" style="left:672.5px;top:40px;width:121px;height:1px;background:#3c3c3c"></div><div class="a" style="left:672.5px;top:50px;width:121px;height:1px;background:#3c3c3c"></div><div class="a" style="left:672.5px;top:61px;width:121px;height:1px;background:#3c3c3c"></div><div class="a" style="left:672.5px;top:72px;width:121px;height:1px;background:#3c3c3c"></div><div class="a" style="left:672.5px;top:82px;width:121px;height:1px;background:#3c3c3c"></div><div class="a" style="left:672.5px;top:93px;width:121px;height:1px;background:#3c3c3c"></div><div class="a" style="left:672.5px;top:103px;width:121px;height:1px;background:#3c3c3c"></div><div class="a" style="left:672.5px;top:114px;width:121px;height:1px;background:#3c3c3c"></div><div class="a" style="left:672.5px;top:125px;width:121px;height:1px;background:#3c3c3c"></div><div class="a" style="left:672.5px;top:135px;width:121px;height:1px;background:#3c3c3c"></div><div class="a" style="left:672.5px;top:146px;width:121px;height:1px;background:#3c3c3c"></div><div class="a" style="left:672.5px;top:156px;width:121px;height:1px;background:#3c3c3c"></div><div class="a" style="left:672.5px;top:167px;width:121px;height:1px;background:#3c3c3c"></div><div class="a" style="left:683.3px;top:40px;width:0.8px;height:128px;background:#3c3c3c"></div><div class="a" style="left:695.2px;top:40px;width:0.8px;height:128px;background:#3c3c3c"></div>
<svg class="a" style="left:675px;top:42.6px" width="7" height="6"><path d="M0.8 3.2 L2.6 5 L6.2 0.8" fill="none" stroke="#ececec" stroke-width="1.1"/></svg><div class="a" style="left:686.5px;top:42.8px;width:6.5px;height:6px;border:0.7px solid #9a9a9a;background:#777"></div><div class="a" style="left:698.5px;top:44.6px;border-left:2px solid transparent;border-right:2px solid transparent;border-top:2.6px solid #e8e8e8"></div><div class="a" style="left:708px;top:43.6px;width:7.5px;height:5px;background:#c8c8c8;border-radius:0.5px"></div><div class="a" style="left:708px;top:42.8px;width:3px;height:1.5px;background:#c8c8c8"></div><div class="t" style="left:718px;top:43.2px;font-size:6px;color:#dcdcdc">Default Actions</div>
<svg class="a" style="left:675px;top:53.2px" width="7" height="6"><path d="M0.8 3.2 L2.6 5 L6.2 0.8" fill="none" stroke="#ececec" stroke-width="1.1"/></svg><div class="a" style="left:710.8px;top:54.2px;border-top:2.2px solid transparent;border-bottom:2.2px solid transparent;border-left:3.3px solid #f0f0f0"></div><div class="t" style="left:718.6px;top:53.8px;font-size:6px;color:#dcdcdc">Opacity 60 (selection)</div>
<svg class="a" style="left:675px;top:63.8px" width="7" height="6"><path d="M0.8 3.2 L2.6 5 L6.2 0.8" fill="none" stroke="#ececec" stroke-width="1.1"/></svg><div class="a" style="left:710.8px;top:64.8px;border-top:2.2px solid transparent;border-bottom:2.2px solid transparent;border-left:3.3px solid #f0f0f0"></div><div class="t" style="left:718.6px;top:64.4px;font-size:6px;color:#dcdcdc">Opacity 40 Screen (select...</div>
<svg class="a" style="left:675px;top:74.4px" width="7" height="6"><path d="M0.8 3.2 L2.6 5 L6.2 0.8" fill="none" stroke="#ececec" stroke-width="1.1"/></svg><div class="a" style="left:710.8px;top:75.4px;border-top:2.2px solid transparent;border-bottom:2.2px solid transparent;border-left:3.3px solid #f0f0f0"></div><div class="t" style="left:718.6px;top:75.0px;font-size:6px;color:#dcdcdc">Apply Default Style (selec...</div>
<svg class="a" style="left:675px;top:85.0px" width="7" height="6"><path d="M0.8 3.2 L2.6 5 L6.2 0.8" fill="none" stroke="#ececec" stroke-width="1.1"/></svg><div class="a" style="left:686.5px;top:85.2px;width:6.5px;height:6px;border:0.7px solid #9a9a9a;background:#777"></div><div class="a" style="left:710.8px;top:86.0px;border-top:2.2px solid transparent;border-bottom:2.2px solid transparent;border-left:3.3px solid #f0f0f0"></div><div class="t" style="left:718.6px;top:85.6px;font-size:6px;color:#dcdcdc">Save For Web GIF 64 Dith...</div>
<svg class="a" style="left:675px;top:95.6px" width="7" height="6"><path d="M0.8 3.2 L2.6 5 L6.2 0.8" fill="none" stroke="#ececec" stroke-width="1.1"/></svg><div class="a" style="left:686.5px;top:95.8px;width:6.5px;height:6px;border:0.7px solid #9a9a9a;background:#777"></div><div class="a" style="left:710.8px;top:96.6px;border-top:2.2px solid transparent;border-bottom:2.2px solid transparent;border-left:3.3px solid #f0f0f0"></div><div class="t" style="left:718.6px;top:96.2px;font-size:6px;color:#dcdcdc">Save For Web JPG Medium</div>
<svg class="a" style="left:675px;top:106.2px" width="7" height="6"><path d="M0.8 3.2 L2.6 5 L6.2 0.8" fill="none" stroke="#ececec" stroke-width="1.1"/></svg><div class="a" style="left:686.5px;top:106.4px;width:6.5px;height:6px;border:0.7px solid #9a9a9a;background:#777"></div><div class="a" style="left:710.8px;top:107.2px;border-top:2.2px solid transparent;border-bottom:2.2px solid transparent;border-left:3.3px solid #f0f0f0"></div><div class="t" style="left:718.6px;top:106.8px;font-size:6px;color:#dcdcdc">Save For Web PNG 24</div>
<svg class="a" style="left:675px;top:116.8px" width="7" height="6"><path d="M0.8 3.2 L2.6 5 L6.2 0.8" fill="none" stroke="#ececec" stroke-width="1.1"/></svg><div class="a" style="left:710.8px;top:117.8px;border-top:2.2px solid transparent;border-bottom:2.2px solid transparent;border-left:3.3px solid #f0f0f0"></div><div class="t" style="left:718.6px;top:117.4px;font-size:6px;color:#dcdcdc">Simplify (selection)</div>
<svg class="a" style="left:675px;top:127.4px" width="7" height="6"><path d="M0.8 3.2 L2.6 5 L6.2 0.8" fill="none" stroke="#ececec" stroke-width="1.1"/></svg><div class="a" style="left:710.8px;top:128.4px;border-top:2.2px solid transparent;border-bottom:2.2px solid transparent;border-left:3.3px solid #f0f0f0"></div><div class="t" style="left:718.6px;top:128.0px;font-size:6px;color:#dcdcdc">Simplify Straight (selection)</div>
<svg class="a" style="left:675px;top:138.0px" width="7" height="6"><path d="M0.8 3.2 L2.6 5 L6.2 0.8" fill="none" stroke="#ececec" stroke-width="1.1"/></svg><div class="a" style="left:710.8px;top:139.0px;border-top:2.2px solid transparent;border-bottom:2.2px solid transparent;border-left:3.3px solid #f0f0f0"></div><div class="t" style="left:718.6px;top:138.6px;font-size:6px;color:#dcdcdc">Revert</div>
<svg class="a" style="left:675px;top:148.6px" width="7" height="6"><path d="M0.8 3.2 L2.6 5 L6.2 0.8" fill="none" stroke="#ececec" stroke-width="1.1"/></svg><div class="a" style="left:686.5px;top:148.8px;width:6.5px;height:6px;border:0.7px solid #9a9a9a;background:#777"></div><div class="a" style="left:710.8px;top:149.6px;border-top:2.2px solid transparent;border-bottom:2.2px solid transparent;border-left:3.3px solid #f0f0f0"></div><div class="t" style="left:718.6px;top:149.2px;font-size:6px;color:#dcdcdc">Delete Unused Panel Items</div>
<svg class="a" style="left:675px;top:159.2px" width="7" height="6"><path d="M0.8 3.2 L2.6 5 L6.2 0.8" fill="none" stroke="#ececec" stroke-width="1.1"/></svg><div class="a" style="left:686.5px;top:159.4px;width:6.5px;height:6px;border:0.7px solid #9a9a9a;background:#777"></div><div class="a" style="left:710.8px;top:160.2px;border-top:2.2px solid transparent;border-bottom:2.2px solid transparent;border-left:3.3px solid #f0f0f0"></div><div class="t" style="left:718.6px;top:159.8px;font-size:6px;color:#dcdcdc">Move Dialog (selection)</div>

<div class="a" style="left:793.5px;top:40px;width:7px;height:128px;background:#3d3d3d"></div>
<div class="a" style="left:794.8px;top:49.6px;width:5.2px;height:57.5px;background:#858585;border-radius:1px"></div>
<div class="a" style="left:795.3px;top:44px;border-left:2px solid transparent;border-right:2px solid transparent;border-bottom:2.2px solid #ccc"></div>
<div class="a" style="left:795.3px;top:164px;border-left:2px solid transparent;border-right:2px solid transparent;border-top:2.2px solid #ccc"></div>
<svg class="a" style="left:670px;top:168px" width="130" height="10">
<rect x="39" y="2" width="5" height="5" fill="#6a6a6a"/>
<circle cx="56" cy="4.5" r="2.5" fill="#6a6a6a"/>
<path d="M69 2 L74 4.5 L69 7 Z" fill="#6a6a6a"/>
<path d="M83 2.5 h2.5 l1 1 h3.5 v4.5 h-7 z" fill="#d0d0d0"/>
<rect x="96.5" y="2" width="6.5" height="6" fill="#d0d0d0"/><path d="M96.5 2 h3 v2.5 h-3z" fill="#4a4a4a"/>
<path d="M111.5 3 h6 M112.3 3.7 v4.3 h4.4 v-4.3" fill="none" stroke="#666" stroke-width="0.8"/>
</svg>
<!-- Document info -->
<div class="a" style="left:670px;top:178px;width:130px;height:2px;background:#2e2e2e"></div>
<div class="a pn" style="left:670px;top:180px;width:130px;height:153px"></div>
<div class="a tabrow" style="left:670px;top:180px;width:130px;height:8.7px;background:#383838"></div>
<div class="a tabon" style="left:726.5px;top:180px;width:49px;height:8.7px"></div>
<div class="a sep" style="left:693px;top:180px;height:8.7px"></div><div class="a sep" style="left:726px;top:180px;height:8.7px"></div>
<div class="t tb" style="left:673.4px;top:181.5px">Links</div>
<div class="t tb" style="left:696.7px;top:181.5px">Libraries</div>
<div class="t tb" style="left:730px;top:181.5px;color:#e6e6e6">Document Info</div>
<div class="a menu" style="left:793px;top:182.5px"></div>
<div class="t" style="left:673.4px;top:194.1px;font-size:6.2px;color:#d2d2d2">Document:</div>
<div class="t" style="left:673.4px;top:207.3px;font-size:6.2px;color:#d2d2d2">Name: palette.ai</div>
<div class="t" style="left:673.4px;top:220.7px;font-size:6.2px;color:#d2d2d2">Color Mode: RGB color</div>
<div class="t" style="left:673.4px;top:227.4px;font-size:6.2px;color:#d2d2d2">Color Profile: sRGB IEC61966-2.1</div>
<div class="t" style="left:673.4px;top:234.3px;font-size:6.2px;color:#d2d2d2">Ruler Units: pixels</div>
<div class="t" style="left:673.4px;top:241.0px;font-size:6.2px;color:#d2d2d2">Artboard Dimensions: 1230 px x 804.15</div>
<div class="t" style="left:673.4px;top:247.7px;font-size:6.2px;color:#d2d2d2">px</div>
<div class="t" style="left:673.4px;top:254.3px;font-size:6.2px;color:#d2d2d2">Show Images in Outline Mode: OFF</div>
<div class="t" style="left:673.4px;top:261.1px;font-size:6.2px;color:#d2d2d2">Highlight Substituted Fonts: OFF</div>
<div class="t" style="left:673.4px;top:267.7px;font-size:6.2px;color:#d2d2d2">Highlight Substituted Glyphs: OFF</div>
<div class="t" style="left:673.4px;top:274.4px;font-size:6.2px;color:#d2d2d2">Preserve Text Editability</div>
<div class="t" style="left:673.4px;top:281.1px;font-size:6.2px;color:#d2d2d2">Simulate Colored Paper: OFF</div>

<!-- Appearance -->
<div class="a" style="left:670px;top:333px;width:130px;height:2px;background:#2e2e2e"></div>
<div class="a pn" style="left:670px;top:335px;width:130px;height:153px"></div>
<div class="a tabrow" style="left:670px;top:335px;width:130px;height:8.7px;background:#383838"></div>
<div class="a tabon" style="left:704.6px;top:335px;width:40.4px;height:8.7px"></div>
<div class="a sep" style="left:704px;top:335px;height:8.7px"></div>
<div class="t tb" style="left:673.4px;top:336.5px">Variables</div>
<div class="t tb" style="left:708px;top:336.5px;color:#e6e6e6">Appearance</div>
<div class="a menu" style="left:793px;top:337.5px"></div>
<div class="a" style="left:672px;top:347.5px;width:127px;height:125px;background:#4a4a4a;border:0.7px solid #383838"></div>
<div class="a" style="left:674.3px;top:350px;width:10px;height:9.6px;background:#efdf7d;border:0.5px solid #888"></div>
<div class="t tb" style="left:698.7px;top:352.3px;color:#e8e8e8">No Selection</div>
<div class="a" style="left:672px;top:361.3px;width:128px;height:0.6px;background:#3c3c3c"></div>
<div class="a" style="left:672px;top:375.6px;width:128px;height:12.7px;background:#5a5a5a"></div>
<div class="a" style="left:672px;top:389.5px;width:128px;height:0.6px;background:#3c3c3c"></div>
<div class="a" style="left:672px;top:404px;width:128px;height:13px;background:#5a5a5a"></div>
<div class="a" style="left:672px;top:431.2px;width:128px;height:0.6px;background:#3c3c3c"></div>
<div class="a" style="left:686.5px;top:361.3px;width:0.6px;height:70px;background:#3c3c3c"></div>
<svg class="a" style="left:672px;top:361px" width="128" height="71">
<g fill="none" stroke="#d8d8d8" stroke-width="0.8"><path d="M4.5 8.3 Q8 5 11.5 8.3 Q8 11 4.5 8.3Z"/><path d="M4.5 36 Q8 32.7 11.5 36 Q8 38.7 4.5 36Z"/></g>
<circle cx="8" cy="8.2" r="1.2" fill="#d8d8d8"/><circle cx="8" cy="35.9" r="1.2" fill="#d8d8d8"/>
<g fill="none" stroke="#646464" stroke-width="0.7"><path d="M4.5 22 Q8 19 11.5 22 Q8 24.5 4.5 22Z"/><path d="M4.5 49.7 Q8 46.7 11.5 49.7 Q8 52.2 4.5 49.7Z"/><path d="M4.5 63.7 Q8 60.7 11.5 63.7 Q8 66.2 4.5 63.7Z"/></g>
<path d="M17 7 L21 7 L19 9.6 Z" fill="#e8e8e8"/><path d="M17 34.8 L21 34.8 L19 37.4 Z" fill="#e8e8e8"/>
</svg>
<div class="t" style="left:698.7px;top:366px;font-size:6px;color:#e39d48;border-bottom:0.6px solid rgba(225,150,60,0.3);-webkit-text-stroke:0.05px">Stroke:</div>
<div class="a" style="left:723.2px;top:365px;width:8.5px;height:9px;background:#fff;border:0.6px solid #999;overflow:hidden"><div class="a" style="left:-2.5px;top:3.5px;width:13px;height:1.1px;background:#d42a2f;transform:rotate(-45deg)"></div></div>
<div class="t" style="left:710.2px;top:379.7px;font-size:6px;color:#e39d48;border-bottom:0.6px solid rgba(225,150,60,0.3);-webkit-text-stroke:0.05px">Opacity:</div>
<div class="t" style="left:733.8px;top:379.7px;font-size:6px;color:#e8e8e8">Default</div>
<div class="t" style="left:698.7px;top:393.7px;font-size:6px;color:#bdbdbd">Fill:</div>
<div class="a" style="left:723.2px;top:392.5px;width:8.5px;height:9px;background:#efdf7d;border:0.6px solid #aaa;box-shadow:inset 0 0 0 0.8px #f7f0c4"></div>
<div class="t" style="left:710.2px;top:407.4px;font-size:6px;color:#e39d48;border-bottom:0.6px solid rgba(225,150,60,0.3);-webkit-text-stroke:0.05px">Opacity:</div>
<div class="t" style="left:734.3px;top:407.4px;font-size:6px;color:#e8e8e8">Default</div>
<div class="t" style="left:699.1px;top:421.4px;font-size:6px;color:#e39d48;border-bottom:0.6px solid rgba(225,150,60,0.3);-webkit-text-stroke:0.05px">Opacity:</div>
<div class="t" style="left:723.2px;top:421.4px;font-size:6px;color:#e8e8e8">Default</div>
<svg class="a" style="left:670px;top:473px" width="130" height="11">
<rect x="6.5" y="3" width="5" height="5" fill="none" stroke="#d8d8d8" stroke-width="0.9"/>
<rect x="21" y="3" width="5.5" height="5.5" fill="#aaa"/><rect x="22.3" y="4.3" width="3" height="3" fill="#777"/>
<text x="36" y="8.5" font-family="Liberation Serif" font-style="italic" font-size="7" fill="#d0d0d0">fx</text><path d="M41 8.5 L43 8.5 L42 9.5Z" fill="#ccc"/>
<circle cx="85.8" cy="5.4" r="2.6" fill="none" stroke="#d8d8d8" stroke-width="0.8"/><path d="M84 3.6 L87.6 7.2" stroke="#d8d8d8" stroke-width="0.8"/>
<rect x="98" y="2.5" width="6" height="6" fill="#666"/><path d="M98 2.5 h3 v2.5 h-3z" fill="#4a4a4a"/>
<path d="M111.5 3 h6 M112.3 3.7 v4.3 h4.4 v-4.3" fill="none" stroke="#666" stroke-width="0.8"/>
</svg>
<div class="a" style="left:730px;top:485.5px;width:11px;height:1.5px;background:#222"></div>
</div></body></html>
